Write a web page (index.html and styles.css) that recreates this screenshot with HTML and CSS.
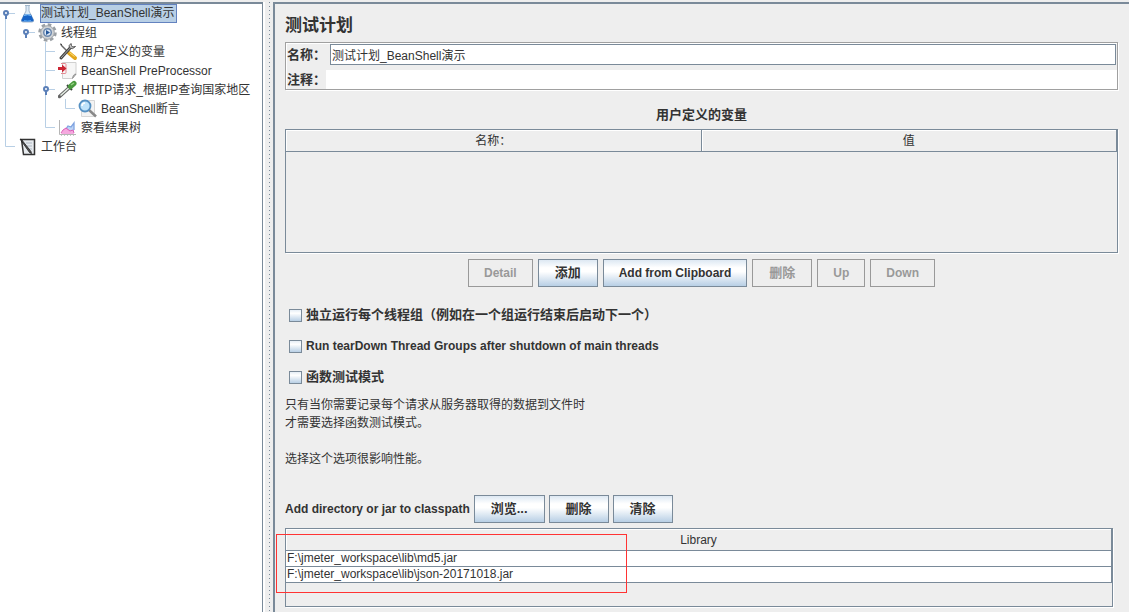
FILE: index.html
```html
<!DOCTYPE html>
<html lang="zh-CN">
<head>
<meta charset="utf-8">
<title>测试计划_BeanShell演示</title>
<link rel="stylesheet" href="styles.css">
</head>
<body>
<div class="app">
  <nav class="tree" aria-label="测试计划">
    <ul class="tree-list">
      <li class="node">
        <svg class="guide" width="18" height="19"><path class="line" d="M5.500 10V19M9 9.500H15"/><circle class="knob" cx="6" cy="9" r="2"/><path class="stem" d="M6 11V15"/></svg>
        <svg class="icon" width="20" height="19" viewBox="0 0 20 19"><path d="M7 1.500h5M8 2v5L3.500 16q-.5 2 1.500 2h9q2 0 1.500-2L11 7V2" fill="#dceaf7" stroke="#9fb4c8"/><path d="M6 10.500h7l2.500 5.500q.5 1.500-1.500 1.500H5Q3 17.500 3.500 16z" fill="#1763c6"/><path d="M6 11.500q3.500-1.500 7 0" stroke="#7cc0f8" fill="none"/><path d="M6 16.500q3.500 1 7 0" stroke="#4da0f0" fill="none"/></svg>
        <span class="label selected">测试计划_BeanShell演示</span>
      </li>
      <li class="node">
        <svg class="guide" width="38" height="19"><path class="line" d="M5.500 0V19M29 9.500H35"/><circle class="knob" cx="26" cy="9" r="2"/><path class="stem" d="M26 11V15"/></svg>
        <svg class="icon" width="20" height="19" viewBox="0 0 20 19"><circle cx="9.500" cy="9.500" r="8" fill="none" stroke="#9a9fa4" stroke-width="2.500" stroke-dasharray="3.600 2.680"/><circle cx="9.500" cy="9.500" r="6.800" fill="#cfd2d5" stroke="#9da2a7"/><circle cx="9.500" cy="9.500" r="3.800" fill="#dbe7f5" stroke="#6d89ad" stroke-width="1.500"/><path d="M8 7l4 2.500L8 12z" fill="#24579b"/></svg>
        <span class="label">线程组</span>
      </li>
      <li class="node">
        <svg class="guide" width="58" height="19"><path class="line" d="M5.500 0V19M45.500 0V19M45 9.500H55"/></svg>
        <svg class="icon" width="20" height="19" viewBox="0 0 20 19"><path d="M3 3l8 8" stroke="#666" stroke-width="1.500"/><path d="M2 2l2 .5" stroke="#333"/><path d="M11 11l6 5" stroke="#e2a51b" stroke-width="4" stroke-linecap="round"/><path d="M11.500 10.500l5 4" stroke="#ffe27a"/><path d="M3 16L13 5" stroke="#444" stroke-width="3" stroke-linecap="round"/><path d="M3 16L13 5" stroke="#aaa"/><path d="M13 1.500q-3 2-1.500 4.500 3 2 6-1.500l-3 .5-1-1.500z" fill="#c8c8c8" stroke="#555"/></svg>
        <span class="label">用户定义的变量</span>
      </li>
      <li class="node">
        <svg class="guide" width="58" height="19"><path class="line" d="M5.500 0V19M45.500 0V19M45 9.500H55"/></svg>
        <svg class="icon" width="20" height="19" viewBox="0 0 20 19"><path d="M4.500 1.500h13.500v12l-4 4H4.500z" fill="#f6f6f6" stroke="#d0d0d0"/><path d="M18 13q-3 0-3.500 4.500z" fill="#bbb" stroke="#777" stroke-width=".6"/><path d="M3 2.500h4q1 0 1 1v8q0 1-1 1H3" fill="none" stroke="#e58a92"/><path d="M0 6h4V3.500L8.500 7.500 4 11.500V9H0z" fill="#cc2634"/></svg>
        <span class="label">BeanShell PreProcessor</span>
      </li>
      <li class="node">
        <svg class="guide" width="58" height="19"><path class="line" d="M5.500 0V19M45.500 0V19M49 9.500H55"/><circle class="knob" cx="46" cy="9" r="2"/><path class="stem" d="M46 11V15"/></svg>
        <svg class="icon" width="20" height="19" viewBox="0 0 20 19"><path d="M1.500 16.500L12 7" stroke="#666" stroke-width="3.500" stroke-linecap="round"/><path d="M2.500 15.500L12 7" stroke="#e6efe6" stroke-width="1.500"/><path d="M9 5l5 5" stroke="#3b443b" stroke-width="2"/><path d="M12.500 6.500l3.500-3" stroke="#4a9a3e" stroke-width="5" stroke-linecap="round"/><path d="M13 5l3-2" stroke="#97d285" stroke-width="1.500"/></svg>
        <span class="label">HTTP请求_根据IP查询国家地区</span>
      </li>
      <li class="node">
        <svg class="guide" width="78" height="19"><path class="line" d="M5.500 0V19M45.500 0V19M65.500 0V9.500H75"/></svg>
        <svg class="icon" width="20" height="19" viewBox="0 0 20 19"><path d="M3.500 1.500h13v16h-13z" fill="#f3f3f3" stroke="#d6d6d6"/><path d="M11 11l7 6.500" stroke="#888" stroke-width="2.500"/><circle cx="7" cy="7" r="5.500" fill="#bfe3fa" stroke="#5590c2" stroke-width="1.800"/><path d="M4 7q0-3 3-3" stroke="#fff" fill="none" stroke-width="1.500"/></svg>
        <span class="label">BeanShell断言</span>
      </li>
      <li class="node">
        <svg class="guide" width="58" height="19"><path class="line" d="M5.500 0V19M45.500 0V9.500H55"/></svg>
        <svg class="icon" width="20" height="19" viewBox="0 0 20 19"><path d="M8 11l2-3 3 1 3-4v8H9z" fill="#bcd4f5"/><path d="M8 11l2-3 3 1 3-4v7" fill="none" stroke="#7fa3e0" stroke-width="1.300"/><path d="M3 16l2-4 3-2 4 3 3-1 1 4z" fill="#f5a9df"/><path d="M3 15l2-3 3-2 4 3 3-1 1 3" fill="none" stroke="#dd5ab6"/><path d="M1.500 2v14.500H18" stroke="#b5b5b5" fill="none"/><path d="M3 17.500H18" stroke="#c8c8c8" stroke-dasharray="1 2"/></svg>
        <span class="label">察看结果树</span>
      </li>
      <li class="node">
        <svg class="guide" width="18" height="19"><path class="line" d="M5.500 0V9.500H15"/></svg>
        <svg class="icon" width="20" height="19" viewBox="0 0 20 19"><path d="M3.500 2.500h13v15h-11z" fill="#e6eaee" stroke="#333" stroke-width="1.500"/><path d="M8 6h6M9 9h5M11 12h3" stroke="#aeb7c2"/><path d="M2 2l1.500.5L13 14.500l.5 2-2-1z" fill="#555" stroke="#111" stroke-width=".7"/></svg>
        <span class="label">工作台</span>
      </li>
    </ul>
  </nav>
  <div class="splitter"></div>
  <main class="panel">
    <h1 class="title">测试计划</h1>
    <div class="form">
      <div class="field"><label for="name">名称：</label><input id="name" class="text boxed" type="text" value="测试计划_BeanShell演示"></div>
      <div class="field"><label for="comment">注释：</label><input id="comment" class="text" type="text"></div>
    </div>

    <h2 class="subtitle">用户定义的变量</h2>
    <div class="grid-box variables">
      <table class="grid">
        <thead><tr><th>名称：</th><th>值</th></tr></thead>
      </table>
    </div>
    <div class="buttons centered">
      <button class="btn" disabled>Detail</button>
      <button class="btn han">添加</button>
      <button class="btn">Add from Clipboard</button>
      <button class="btn han" disabled>删除</button>
      <button class="btn" disabled>Up</button>
      <button class="btn" disabled>Down</button>
    </div>

    <div class="options">
      <label class="option han"><input type="checkbox" class="check">独立运行每个线程组（例如在一个组运行结束后启动下一个）</label>
      <label class="option"><input type="checkbox" class="check">Run tearDown Thread Groups after shutdown of main threads</label>
      <label class="option han"><input type="checkbox" class="check">函数测试模式</label>
    </div>
    <div class="note">
      <p>只有当你需要记录每个请求从服务器取得的数据到文件时<br>才需要选择函数测试模式。</p>
      <p>选择这个选项很影响性能。</p>
    </div>

    <div class="buttons classpath">
      <span class="caption">Add directory or jar to classpath</span>
      <button class="btn han">浏览...</button>
      <button class="btn han">删除</button>
      <button class="btn han">清除</button>
    </div>
    <div class="grid-box library">
      <table class="grid">
        <thead><tr><th>Library</th></tr></thead>
        <tbody>
          <tr><td>F:\jmeter_workspace\lib\md5.jar</td></tr>
          <tr><td>F:\jmeter_workspace\lib\json-20171018.jar</td></tr>
        </tbody>
      </table>
      <div class="highlight"></div>
    </div>
  </main>
</div>
</body>
</html>
```
FILE: styles.css
```css
:root {
  --edge: #7a8a99;
  --face: #eeeeee;
  --ink: #333333;
}
* { box-sizing: border-box; }
body {
  margin: 0;
  background: var(--face);
  color: var(--ink);
  font: 12px/18px "Liberation Sans", "Noto Sans CJK SC", sans-serif;
}
h1, h2, p, ul { margin: 0; padding: 0; }
.app {
  display: flex;
  min-height: 100vh;
  padding-top: 2px;
  overflow: hidden;
}

/* Test plan tree */
.tree {
  flex: none;
  width: 263px;
  background: #fff;
  border-top: 2px solid var(--edge);
  border-right: 1px solid var(--edge);
}
.tree-list { list-style: none; }
.node {
  display: flex;
  align-items: center;
  height: 19px;
  white-space: nowrap;
}
.guide, .icon { flex: none; display: block; }
.line { fill: none; stroke: #b8cfe5; }
.knob { fill: #fff; stroke: #5a7fb8; stroke-width: 2; }
.stem { stroke: #5a7fb8; stroke-width: 2; }
.label {
  margin-left: 2px;
  padding: 1px 2px 0 1px;
  line-height: 18px;
}
.selected {
  padding: 0 2px 0 0;
  background: #b8cfe5;
  border: 1px solid #6382bf;
  line-height: 17px;
}

/* Divider between the tree and the editor */
.splitter {
  flex: none;
  width: 10px;
  padding: 0 2px 0 4px;
  border-left: 2px solid #fff;
  background:
    conic-gradient(at 1px 1px, transparent 75%, var(--edge) 0) content-box 0 0 / 4px 4px,
    conic-gradient(at 1px 1px, transparent 75%, var(--edge) 0) content-box 2px 2px / 4px 4px,
    var(--face);
}

/* Editor */
.panel {
  flex: 1;
  min-width: 0;
  padding: 11px 11px 0 10px;
  border-top: 2px solid var(--edge);
  border-left: 2px solid var(--edge);
}
.title {
  margin-bottom: 5px;
  font-size: 17px;
  line-height: 22px;
}
.form {
  display: flex;
  flex-direction: column;
  gap: 5px;
  padding: 1px 0 0 1px;
  border: 1px solid #a0a0a0;
  box-shadow: 1px 1px #fff, inset 1px 1px #fff;
}
.field { display: flex; align-items: center; }
.field label {
  flex: none;
  width: 39px;
  font-size: 13px;
  font-weight: bold;
}
.text {
  flex: 1;
  min-width: 0;
  height: 19px;
  padding: 0 1px;
  border: 0;
  outline: 0;
  background: #fff;
  color: var(--ink);
  font: inherit;
}
.boxed {
  height: 21px;
  margin: 0 1px 0 4px;
  border: 1px solid var(--edge);
}
.subtitle {
  padding: 16px 0 5px;
  font-size: 13px;
  line-height: 18px;
  text-align: center;
}
.grid-box {
  position: relative;
  border: 1px solid var(--edge);
  box-shadow: 1px 1px #fff;
}
.variables { height: 124px; }
.grid {
  width: 100%;
  table-layout: fixed;
  border-collapse: separate;
  border-spacing: 0;
}
.grid th {
  height: 22px;
  padding: 1px 0 0;
  border-right: 1px solid var(--edge);
  border-bottom: 1px solid var(--edge);
  box-shadow: inset 1px 1px #fff;
  font-weight: normal;
}
.grid td {
  height: 16px;
  padding: 0 1px;
  background: #fff;
  border-right: 1px solid var(--edge);
  border-bottom: 1px solid var(--edge);
  line-height: 15px;
}
.buttons { display: flex; align-items: center; gap: 5px; }
.centered { justify-content: center; padding-top: 6px; }
.btn {
  height: 28px;
  padding: 0 15px;
  border: 1px solid var(--edge);
  border-radius: 0;
  background: linear-gradient(#dde8f3, #fff 30%, #fff 45%, #b8cfe5);
  color: var(--ink);
  font: bold 12px/18px "Liberation Sans", "Noto Sans CJK SC", sans-serif;
}
.btn:disabled {
  background: none;
  border-color: #999;
  color: #999;
}
.btn.han { padding: 0 16px; }
.han { font-size: 13px; }
.options {
  display: flex;
  flex-direction: column;
  align-items: flex-start;
  gap: 13px;
  padding: 19px 4px 10px;
}
.option {
  display: flex;
  align-items: center;
  gap: 4px;
  font-weight: bold;
}
.check {
  appearance: none;
  width: 13px;
  height: 13px;
  margin: 0;
  border: 1px solid var(--edge);
  background: linear-gradient(#e6eef6, #fff 30%, #b8cfe5);
}
.note p + p { margin-top: 18px; }
.classpath { margin-top: 27px; gap: 4px; }
.caption { font-weight: bold; }
.library {
  height: 79px;
  margin-top: 5px;
  margin-right: 5px;
}
.highlight {
  position: absolute;
  top: 5px;
  left: -10px;
  width: 351px;
  height: 59px;
  border: 1px solid #ff3333;
}
```
